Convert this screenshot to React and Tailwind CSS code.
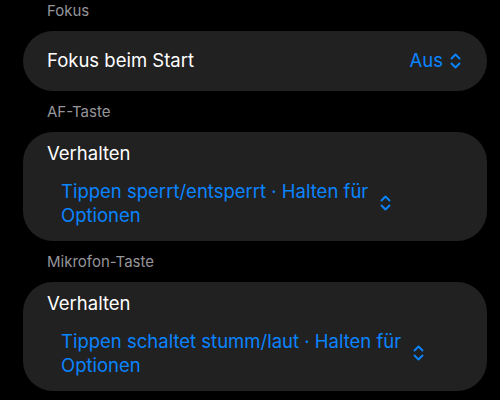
import React from "react";

function Chevrons() {
  return (
    <svg width="11" height="16" viewBox="0 0 11 16" fill="none" className="shrink-0">
      <path d="M1.5 5.5L5.5 1.5L9.5 5.5" stroke="#0a84ff" strokeWidth="1.9" strokeLinecap="round" strokeLinejoin="round" />
      <path d="M1.5 10.5L5.5 14.5L9.5 10.5" stroke="#0a84ff" strokeWidth="1.9" strokeLinecap="round" strokeLinejoin="round" />
    </svg>
  );
}

function Header({ children }) {
  return (
    <div className="h-[22px] pl-[47px] text-[15px] leading-[22px] text-[#95959a]">{children}</div>
  );
}

function MultiCard({ line1 }) {
  return (
    <div className="mt-[9px] ml-[23px] mr-[13px] rounded-[30px] bg-[#212121] pl-[24px] pr-[24px] pt-[9px] pb-[14px]">
      <div className="h-[24px] text-[18.5px] leading-[24px] text-white">Verhalten</div>
      <div className="mt-[14px] flex items-center gap-[12px] pl-[14px]">
        <div className="whitespace-nowrap text-[18.5px] leading-[24px] text-[#0a84ff]">
          {line1}
          <br />
          Optionen
        </div>
        <Chevrons />
      </div>
    </div>
  );
}

export default function App() {
  return (
    <div
      className="h-[400px] w-[500px] overflow-hidden bg-black"
      style={{ fontFamily: "Inter, 'Noto Sans', sans-serif" }}
    >
      <Header>Fokus</Header>
      <div className="mt-[9px] ml-[23px] mr-[13px] flex h-[60px] items-center justify-between rounded-[30px] bg-[#212121] pl-[24px] pr-[26px]">
        <span className="text-[18.5px] text-white">Fokus beim Start</span>
        <span className="flex items-center gap-[7px] text-[18.5px] text-[#0a84ff]">
          Aus
          <Chevrons />
        </span>
      </div>
      <div className="mt-[10px]">
        <Header>AF-Taste</Header>
      </div>
      <MultiCard line1="Tippen sperrt/entsperrt · Halten für" />
      <div className="mt-[10px]">
        <Header>Mikrofon-Taste</Header>
      </div>
      <MultiCard line1="Tippen schaltet stumm/laut · Halten für" />
    </div>
  );
}
